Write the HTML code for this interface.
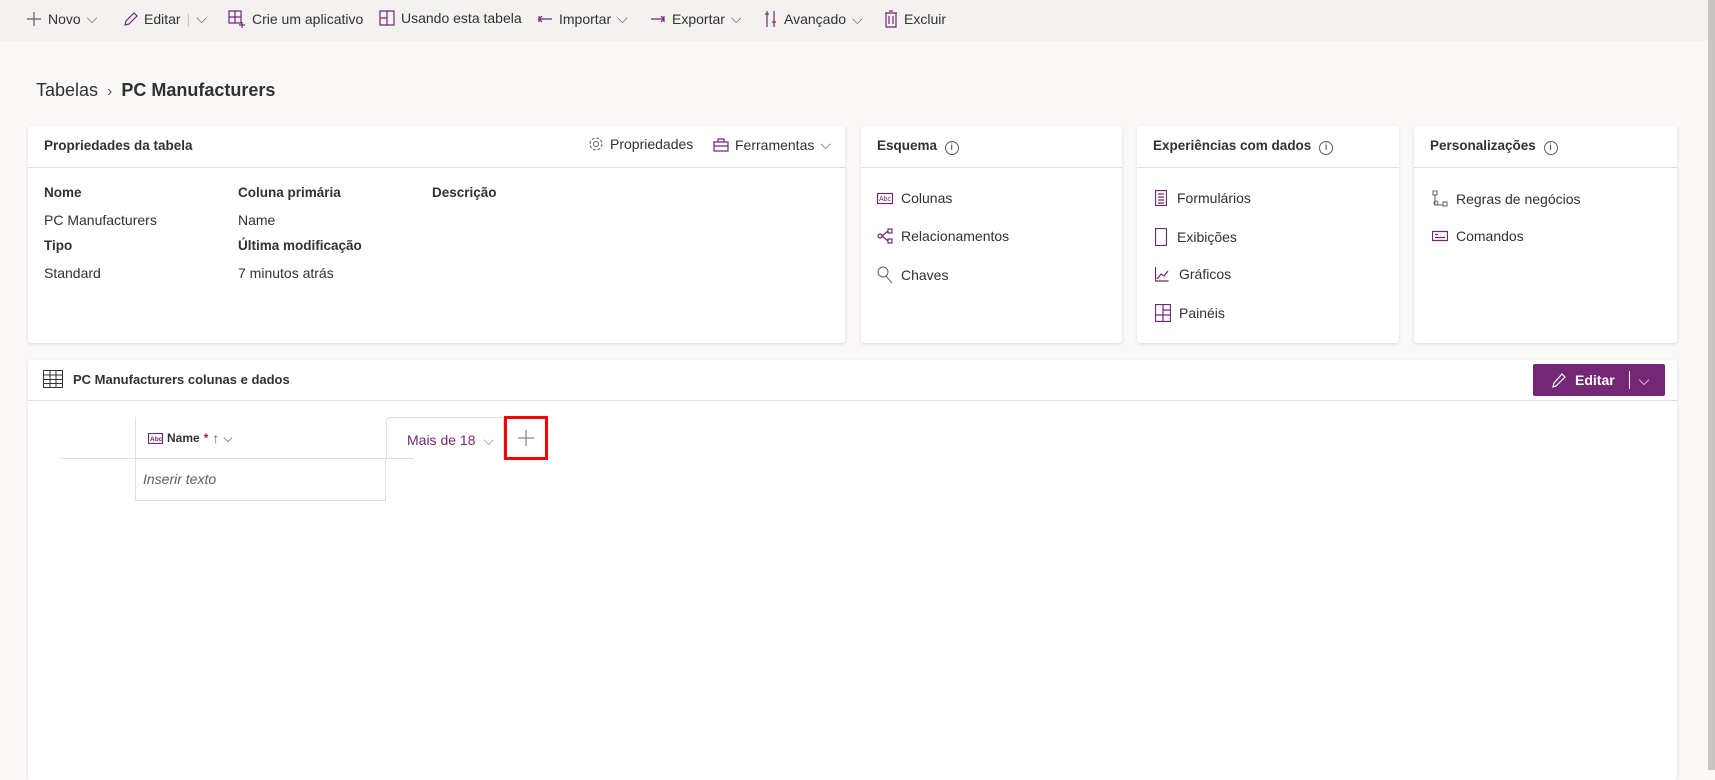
<!DOCTYPE html>
<html><head><meta charset="utf-8"><style>
*{box-sizing:border-box;margin:0;padding:0}
body{width:1715px;height:770px;overflow:hidden;background:#faf9f8;font-family:"Segoe UI","Liberation Sans",sans-serif;color:#323130;font-size:14px;position:relative}
.a{position:absolute;white-space:nowrap}
.tb{position:absolute;left:0;top:0;width:1715px;height:41px;background:#f3f2f1}
.card{position:absolute;background:#fff;border-radius:3px;box-shadow:0 1px 3px rgba(0,0,0,.13)}
.hl{position:absolute;left:0;right:0;height:1px;background:#e1dfdd}
.b{font-weight:bold}
.ti{display:flex;align-items:center;gap:6px;position:absolute;top:10px;font-size:14px}
svg{display:block}
.p{stroke:#742774;fill:none;stroke-width:1.2}
.h{font-size:13.5px}
</style></head><body>
<div class="tb">
 <div class="ti" style="left:26px"><svg width="16" height="16"><path d="M8 1v14M1 8h14" stroke="#605e5c" stroke-width="1.2"/></svg>Novo <span style="color:#605e5c">⌵</span></div>
 <div class="ti" style="left:122px"><svg width="16" height="16"><path d="M3 14l1-4 8-8 3 3-8 8z" class="p"/></svg>Editar <span style="color:#c8c6c4">|</span> <span style="color:#605e5c">⌵</span></div>
 <div class="ti" style="left:228px"><svg width="18" height="18"><path d="M1 1h12v12H1zM7 1v12M1 7h12M14 12v6M11 15h6" class="p"/></svg>Crie um aplicativo</div>
 <div class="ti" style="left:379px"><svg width="16" height="16"><path d="M1 1h14v14H1zM8 1v14M1 8h7" class="p"/></svg>Usando esta tabela</div>
 <div class="ti" style="left:537px"><svg width="16" height="16"><path d="M2 5v6M2 8h13M5 5l-3 3 3 3" class="p"/></svg>Importar <span style="color:#605e5c">⌵</span></div>
 <div class="ti" style="left:650px"><svg width="16" height="16"><path d="M1 8h13M14 5v6M11 5l3 3-3 3" class="p"/></svg>Exportar <span style="color:#605e5c">⌵</span></div>
 <div class="ti" style="left:764px"><svg width="14" height="18"><path d="M3 1v16M10 1v16M1 4h4M8 12h4" class="p"/></svg>Avançado <span style="color:#605e5c">⌵</span></div>
 <div class="ti" style="left:884px"><svg width="14" height="18"><path d="M1 3h12M5 1h4M2 3v14h10V3M5 6v8M9 6v8" class="p"/></svg>Excluir</div>
</div>
<div class="a" style="left:36px;top:80px;font-size:18px;color:#323130">Tabelas <span style="color:#605e5c;font-size:16px;margin:0 4px">›</span> <span class="b">PC Manufacturers</span></div>

<div class="card" style="left:28px;top:126px;width:817px;height:217px">
 <div class="a b h" style="left:16px;top:12px">Propriedades da tabela</div>
 <div class="a" style="left:560px;top:10px;display:flex;align-items:center;gap:6px"><svg width="16" height="16"><circle cx="8" cy="8" r="2.5" fill="none" stroke="#605e5c"/><circle cx="8" cy="8" r="6" fill="none" stroke="#605e5c" stroke-dasharray="3 1.7"/></svg>Propriedades</div>
 <div class="a" style="left:685px;top:10px;display:flex;align-items:center;gap:6px"><svg width="16" height="16"><path d="M1 5h14v9H1zM5 5V2h6v3M1 9h14" class="p"/></svg>Ferramentas <span style="color:#605e5c">⌵</span></div>
 <div class="hl" style="top:41px"></div>
 <div class="a b h" style="left:16px;top:59px">Nome</div>
 <div class="a" style="left:16px;top:86px">PC Manufacturers</div>
 <div class="a b h" style="left:16px;top:112px">Tipo</div>
 <div class="a" style="left:16px;top:139px">Standard</div>
 <div class="a b h" style="left:210px;top:59px">Coluna primária</div>
 <div class="a" style="left:210px;top:86px">Name</div>
 <div class="a b h" style="left:210px;top:112px">Última modificação</div>
 <div class="a" style="left:210px;top:139px">7 minutos atrás</div>
 <div class="a b h" style="left:404px;top:59px">Descrição</div>
</div>

<div class="card" style="left:861px;top:126px;width:261px;height:217px">
 <div class="a b h" style="left:16px;top:12px">Esquema <span style="font-weight:normal;display:inline-block;width:14px;height:14px;border:1px solid #605e5c;border-radius:50%;font-size:10px;text-align:center;line-height:12px;margin-left:4px">i</span></div>
 <div class="hl" style="top:41px"></div>
 <div class="a" style="left:16px;top:64px;display:flex;gap:8px;align-items:center"><svg width="16" height="14"><rect x=".5" y="2.5" width="15" height="10" class="p"/><text x="2" y="10" font-size="7" fill="#742774" font-family="Liberation Sans">Abc</text></svg>Colunas</div>
 <div class="a" style="left:16px;top:102px;display:flex;gap:8px;align-items:center"><svg width="16" height="16"><circle cx="3" cy="8" r="2" class="p"/><rect x="11" y="1" width="4" height="4" class="p"/><rect x="11" y="11" width="4" height="4" class="p"/><path d="M5 8l6-5M5 8l6 5" class="p"/></svg>Relacionamentos</div>
 <div class="a" style="left:16px;top:140px;display:flex;gap:8px;align-items:center"><svg width="16" height="18"><circle cx="6" cy="6" r="5" fill="none" stroke="#605e5c"/><path d="M9 10l6 7" stroke="#605e5c"/></svg>Chaves</div>
</div>

<div class="card" style="left:1137px;top:126px;width:262px;height:217px">
 <div class="a b h" style="left:16px;top:12px">Experiências com dados <span style="font-weight:normal;display:inline-block;width:14px;height:14px;border:1px solid #605e5c;border-radius:50%;font-size:10px;text-align:center;line-height:12px;margin-left:4px">i</span></div>
 <div class="hl" style="top:41px"></div>
 <div class="a" style="left:18px;top:64px;display:flex;gap:10px;align-items:center"><svg width="12" height="16"><path d="M.5 .5h11v15H.5zM3 4h6M3 7h6M3 10h6M3 13h6" class="p"/></svg>Formulários</div>
 <div class="a" style="left:18px;top:102px;display:flex;gap:10px;align-items:center"><svg width="12" height="18"><path d="M.5 .5h11v17H.5z" class="p"/></svg>Exibições</div>
 <div class="a" style="left:18px;top:140px;display:flex;gap:10px;align-items:center"><svg width="14" height="16"><path d="M.5 1v14h13M2 13l4-5 3 2 4-5" class="p"/></svg>Gráficos</div>
 <div class="a" style="left:18px;top:178px;display:flex;gap:8px;align-items:center"><svg width="16" height="18"><path d="M.5 .5h15v17H.5zM8 .5v17M.5 11h15M8 6h7.5" class="p"/></svg>Painéis</div>
</div>

<div class="card" style="left:1414px;top:126px;width:263px;height:217px">
 <div class="a b h" style="left:16px;top:12px">Personalizações <span style="font-weight:normal;display:inline-block;width:14px;height:14px;border:1px solid #605e5c;border-radius:50%;font-size:10px;text-align:center;line-height:12px;margin-left:4px">i</span></div>
 <div class="hl" style="top:41px"></div>
 <div class="a" style="left:18px;top:64px;display:flex;gap:8px;align-items:center"><svg width="16" height="18"><rect x="1" y="1" width="4" height="4" fill="none" stroke="#605e5c"/><path d="M3 5v10h8" stroke="#605e5c" fill="none"/><circle cx="4" cy="13" r="2" fill="none" stroke="#605e5c"/><rect x="11" y="12" width="4" height="4" fill="none" stroke="#605e5c"/></svg>Regras de negócios</div>
 <div class="a" style="left:18px;top:102px;display:flex;gap:8px;align-items:center"><svg width="16" height="14"><path d="M.5 2.5h15v9H.5zM3 5.5h3M3 8.5h10" class="p"/></svg>Comandos</div>
</div>

<div class="card" style="left:28px;top:360px;width:1649px;height:420px">
 <div class="a" style="left:15px;top:10px;display:flex;gap:10px;align-items:center"><svg width="20" height="18"><path d="M.5 .5h19v17H.5zM.5 5h19M.5 9.5h19M.5 13.5h19M7 .5v17M13 .5v17" stroke="#323130" fill="none"/></svg><span class="b" style="font-size:13px">PC Manufacturers colunas e dados</span></div>
 <div class="a" style="left:1505px;top:4px;width:132px;height:32px;background:#742774;border-radius:2px;color:#fff;font-weight:bold;display:flex;align-items:center">
  <svg width="16" height="16" style="margin-left:18px"><path d="M2 15l1-4 8-9 3 3-9 9z" stroke="#fff" fill="none" stroke-width="1.2"/></svg><span style="margin-left:8px">Editar</span>
  <span style="margin-left:14px;width:1px;height:18px;background:#fff"></span><span style="margin-left:9px;font-weight:normal">⌵</span></div>
 <div class="hl" style="top:40px"></div>
 <div class="a" style="left:32px;top:98px;width:354px;height:1px;background:#e1dfdd"></div>
 <div class="a" style="left:107px;top:57px;width:1px;height:84px;background:#e1dfdd"></div>
 <div class="a" style="left:357px;top:98px;width:1px;height:43px;background:#e1dfdd"></div>
 <div class="a" style="left:107px;top:140px;width:251px;height:1px;background:#e1dfdd"></div>
 <div class="a" style="left:120px;top:70px;display:flex;align-items:center;gap:4px;font-size:12px;font-weight:600"><svg width="15" height="11"><rect x=".5" y=".5" width="14" height="10" class="p"/><text x="2" y="8" font-size="6.5" fill="#742774" font-family="Liberation Sans">Abc</text></svg>Name<span style="color:#a4262c">*</span> <span style="color:#605e5c;font-weight:normal;font-size:14px">↑</span> <span style="font-weight:normal">⌵</span></div>
 <div class="a" style="left:115px;top:111px;font-style:italic;color:#605e5c;font-size:14px">Inserir texto</div>
 <div class="a" style="left:358px;top:57px;width:118px;height:42px;border:1px solid #e1dfdd;border-bottom:none;border-radius:4px 0 0 0;color:#742774;font-size:14px;padding:14px 0 0 20px">Mais de 18 <span style="color:#8a8886;margin-left:4px">⌵</span></div>
 <div class="a" style="left:476px;top:56px;width:44px;height:44px;border:3px solid #f00"><svg width="20" height="20" style="margin:9px 0 0 9px"><path d="M10 2v16M2 10h16" stroke="#8a8886" stroke-width="1.3"/></svg></div>
</div>
<div class="a" style="left:1708px;top:0;width:7px;height:770px;background:#c8c6c4"></div>
</body></html>
